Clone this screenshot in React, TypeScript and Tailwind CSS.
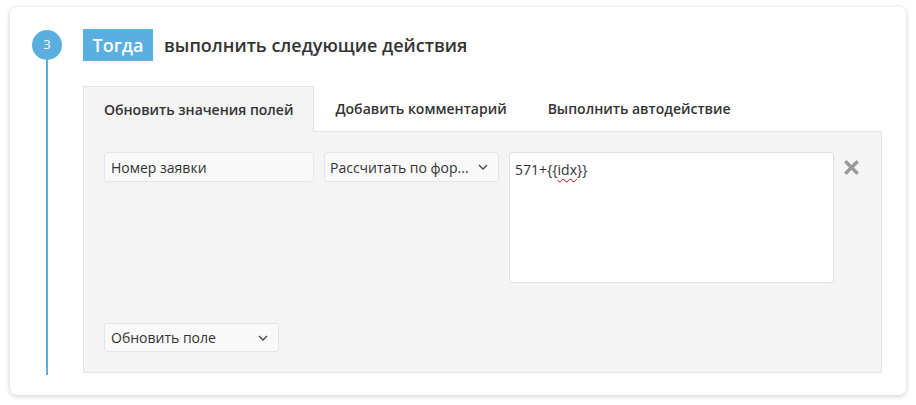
import React from "react";

const Chevron = () => (
  <svg width="10" height="6" viewBox="0 0 10 6" fill="none">
    <path d="M1 1l4 4 4-4" stroke="#444" strokeWidth="1.3" />
  </svg>
);

export default function App() {
  return (
    <div className="w-[916px] h-[405px] bg-white pt-[7px] pl-[10px]" style={{ fontFamily: '"Open Sans", sans-serif' }}>
      <div className="w-[896px] h-[388px] bg-white rounded-[7px] shadow-[0_1px_5px_rgba(0,0,0,0.22)] flex pl-[22px] pt-[22px] pb-[20px] pr-[24px] text-[#333]">
        <div className="w-[30px] flex flex-col items-center">
          <div className="mt-[1px] w-[30px] h-[30px] rounded-full bg-[#5baee0] text-white text-[13px] flex items-center justify-center">3</div>
          <div className="flex-1 w-[2px] bg-[#5baee0]" />
        </div>
        <div className="ml-[21px] flex-1 flex flex-col">
          <div className="flex items-center h-[32px]">
            <div className="h-[32px] w-[70px] bg-[#5baee0] text-white text-[18px] font-semibold flex items-center justify-center">Тогда</div>
            <div className="ml-[11px] text-[18px] font-semibold text-[#333]">выполнить следующие действия</div>
          </div>
          <div className="mt-[25px] flex h-[45px] text-[14px] font-semibold">
            <div className="bg-[#f4f4f4] border border-b-0 border-[#e3e3e3] px-[20px] flex items-center relative z-10 -mb-[1px]">Обновить значения полей</div>
            <div className="px-[21px] flex items-center">Добавить комментарий</div>
            <div className="pl-[20px] pr-[21px] flex items-center">Выполнить автодействие</div>
          </div>
          <div className="flex-1 mb-[2px] bg-[#f4f4f4] border border-[#e3e3e3] px-[20px] pt-[20px] pb-[20px] flex flex-col">
            <div className="flex items-start">
              <div className="w-[210px] h-[30px] bg-[#f9f9f9] border border-[#e5e5e5] rounded-[3px] flex items-center px-[6px] text-[14px]">Номер заявки</div>
              <div className="ml-[10px] w-[175px] h-[30px] bg-[#f9f9f9] border border-[#e5e5e5] rounded-[3px] flex items-center justify-between pl-[5px] pr-[10px] text-[14px]">
                <span>Рассчитать по фор...</span>
                <Chevron />
              </div>
              <div className="ml-[10px] w-[325px] h-[131px] bg-white border border-[#e0e0e0] rounded-[3px] px-[5px] pt-[6px] text-[14px]">
                571+{"{{"}<span className="underline decoration-wavy decoration-[#c00] decoration-1 underline-offset-[3px]">idx</span>{"}}"}
              </div>
              <div className="ml-[10px] mt-[8px]">
                <svg width="15" height="15" viewBox="0 0 15 15">
                  <path d="M2.5 2.5l10 10M12.5 2.5l-10 10" stroke="#9a9a9a" strokeWidth="3.4" strokeLinecap="square" />
                </svg>
              </div>
            </div>
            <div className="mt-auto w-[175px] h-[29px] bg-[#f9f9f9] border border-[#e5e5e5] rounded-[3px] flex items-center justify-between pl-[6px] pr-[10px] text-[14px]">
              <span>Обновить поле</span>
              <Chevron />
            </div>
          </div>
        </div>
      </div>
    </div>
  );
}
